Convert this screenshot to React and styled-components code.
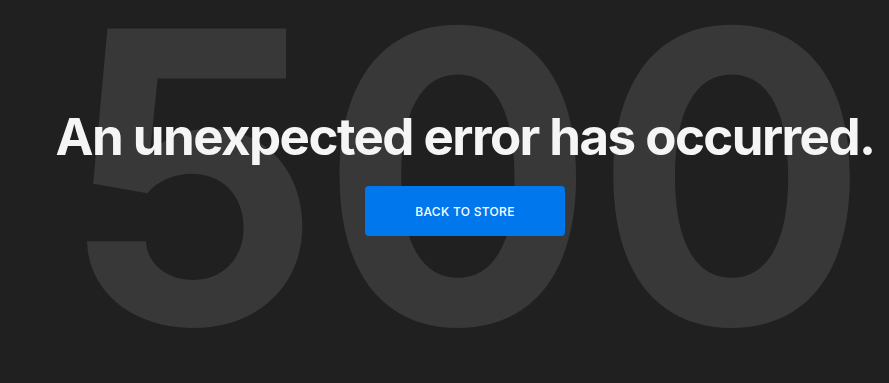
import React from "react";
import styled, { createGlobalStyle } from "styled-components";

const GlobalStyle = createGlobalStyle`
  html, body {
    margin: 0;
    padding: 0;
    background-color: #202020;
  }
  body {
    font-family: Inter, "Noto Sans", sans-serif;
  }
`;

const Page = styled.div`
  position: relative;
  width: 100%;
  height: 383px;
  overflow: hidden;
  display: flex;
  flex-direction: column;
  align-items: center;
  padding-left: 41px;
  box-sizing: border-box;
`;

// 배경 숫자 //
const BigCode = styled.div`
  position: absolute;
  top: -26px;
  left: 41px;
  right: 0;
  text-align: center;
  font-size: 406px;
  font-weight: 700;
  line-height: 1;
  letter-spacing: 0;
  color: #383838;
  user-select: none;
  z-index: 0;
`;

const Content = styled.div`
  position: relative;
  z-index: 1;
  display: flex;
  flex-direction: column;
  align-items: center;
  padding-top: 106px;
`;

const Title = styled.h1`
  margin: 0;
  font-size: 51px;
  font-weight: 700;
  letter-spacing: -1.55px;
  color: #f5f5f5;
  white-space: nowrap;
  line-height: 62px;
`;

const BackBtn = styled.button`
  margin-top: 18px;
  width: 200px;
  height: 50px;
  border: none;
  border-radius: 4px;
  background-color: #0077ed;
  color: #ffffff;
  font-family: Inter, sans-serif;
  font-size: 12px;
  font-weight: 500;
  letter-spacing: 0.3px;
  cursor: pointer;
`;

function App() {
  return (
    <>
      <GlobalStyle />
      <Page>
        <BigCode>500</BigCode>
        <Content>
          <Title>An unexpected error has occurred.</Title>
          <BackBtn>BACK TO STORE</BackBtn>
        </Content>
      </Page>
    </>
  );
}

export default App;
